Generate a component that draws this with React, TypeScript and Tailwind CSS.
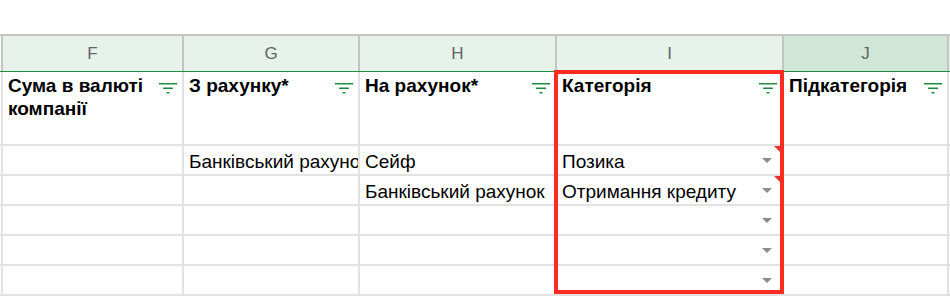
import React from 'react';

type Col = { letter: string; title: string; width: string; dark?: boolean };

const cols: Col[] = [
  { letter: 'F', title: 'Сума в валюті компанії', width: 'w-[181px]' },
  { letter: 'G', title: 'З рахунку*', width: 'w-[176px]' },
  { letter: 'H', title: 'На рахунок*', width: 'w-[197px]' },
  { letter: 'I', title: 'Категорія', width: 'w-[227px]' },
  { letter: 'J', title: 'Підкатегорія', width: 'w-[165px]', dark: true },
];

const rows: string[][] = [
  ['', 'Банківський рахунок', 'Сейф', 'Позика', ''],
  ['', '', 'Банківський рахунок', 'Отримання кредиту', ''],
  ['', '', '', '', ''],
  ['', '', '', '', ''],
  ['', '', '', '', ''],
];

const FilterIcon = () => (
  <svg width="18" height="11" viewBox="0 0 18 11" className="shrink-0">
    <rect x="0" y="0" width="18" height="1.5" fill="#1e8e3e" />
    <rect x="4" y="4.5" width="10" height="1.5" fill="#1e8e3e" />
    <rect x="7.5" y="9" width="3" height="1.5" fill="#1e8e3e" />
  </svg>
);

const Dropdown = () => (
  <svg width="10" height="5" viewBox="0 0 10 5" className="absolute right-[10px] top-[12px]">
    <path d="M0 0 L10 0 L5 5 Z" fill="#8c8c8c" />
  </svg>
);

const Flag = () => (
  <svg width="8" height="8" viewBox="0 0 8 8" className="absolute right-0 top-0">
    <path d="M0 0 L8 0 L8 8 Z" fill="#e0342a" />
  </svg>
);

export default function App() {
  return (
    <div className="relative w-[950px] h-[298px] overflow-hidden bg-white font-['Liberation_Sans',Arial,sans-serif]">
      <div className="h-[34px]" />

      {/* column letters */}
      <div className="flex h-[38px] border-t-2 border-b border-t-[#c4c4c4] border-b-[#1e8e3e]">
        <div className="w-[3px] shrink-0 border-r-2 border-[#c4c4c4] bg-white" />
        {cols.map(c => (
          <div
            key={c.letter}
            className={`${c.width} shrink-0 border-r-2 border-[#c4c4c4] flex items-center justify-center text-[17px] text-[#5f6368] ${c.dark ? 'bg-[#d0e7d7]' : 'bg-[#e7f3ea]'}`}
          >
            {c.letter}
          </div>
        ))}
        <div className="flex-1 bg-[#e7f3ea]" />
      </div>

      {/* header row */}
      <div className="flex h-[74px] border-b-2 border-[#e2e2e2]">
        <div className="w-[3px] shrink-0 border-r-2 border-[#e2e2e2]" />
        {cols.map(c => (
          <div key={c.letter} className={`${c.width} shrink-0 border-r-2 border-[#e2e2e2] flex items-start justify-between pl-[5px] pr-[5px] pt-[2px]`}>
            <span className="text-[19px] leading-[23px] font-bold text-black pr-[4px]">{c.title}</span>
            <div className="pt-[9px]">
              <FilterIcon />
            </div>
          </div>
        ))}
        <div className="flex-1" />
      </div>

      {/* data rows */}
      {rows.map((r, ri) => (
        <div key={ri} className="flex h-[30px] border-b-2 border-[#e2e2e2]">
          <div className="w-[3px] shrink-0 border-r-2 border-[#e2e2e2]" />
          {cols.map((c, ci) => (
            <div key={c.letter} className={`${c.width} shrink-0 border-r-2 border-[#e2e2e2] relative flex items-end overflow-hidden pl-[5px] pb-[1px]`}>
              <span className="text-[19px] leading-[23px] text-black whitespace-nowrap">{r[ci]}</span>
              {ci === 3 && <Dropdown />}
              {ci === 3 && ri < 2 && <Flag />}
            </div>
          ))}
          <div className="flex-1" />
        </div>
      ))}

      {/* selection outline */}
      <div className="absolute left-[554px] top-[70px] w-[230px] h-[224px] border-4 border-[#fd2b20] pointer-events-none" />
    </div>
  );
}
